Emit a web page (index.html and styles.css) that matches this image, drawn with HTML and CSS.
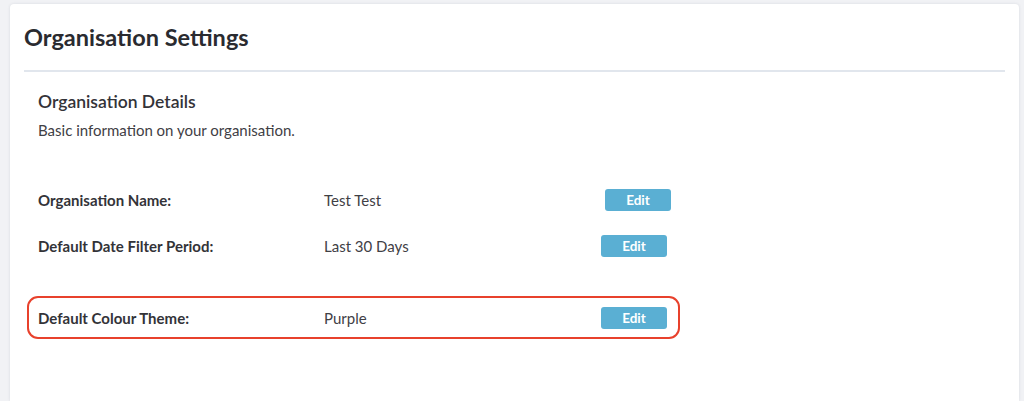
FILE: index.html
```html
<!DOCTYPE html>
<html lang="en">
<head>
<meta charset="utf-8">
<title>Organisation Settings</title>
<link rel="stylesheet" href="styles.css">
</head>
<body>
<div class="card">
  <header class="card-header">
    <h1 class="title">Organisation Settings</h1>
  </header>
  <section class="section">
    <h2 class="section-title">Organisation Details</h2>
    <p class="section-desc">Basic information on your organisation.</p>
    <div class="rows">
      <div class="row row-first">
        <div class="label">Organisation Name:</div>
        <div class="value value-wide">Test Test</div>
        <button class="btn">Edit</button>
      </div>
      <div class="row row-second">
        <div class="label">Default Date Filter Period:</div>
        <div class="value">Last 30 Days</div>
        <button class="btn">Edit</button>
      </div>
      <div class="row row-highlight">
        <div class="label">Default Colour Theme:</div>
        <div class="value">Purple</div>
        <button class="btn">Edit</button>
      </div>
    </div>
  </section>
</div>
</body>
</html>
```

FILE: styles.css
```css
* { box-sizing: border-box; }
html, body { height: 100%; }
body {
  margin: 0;
  padding: 4px 5px 0 10px;
  background: #f1f2f5;
  font-family: Lato, "Open Sans", Arial, sans-serif;
  color: #333338;
  overflow: hidden;
}
.card {
  background: #ffffff;
  border-radius: 4px 4px 0 0;
  box-shadow: 0 0 3px rgba(40, 50, 70, 0.12);
  height: 100%;
}
.card-header {
  margin: 0 14px;
  padding: 17px 0 17px;
  border-bottom: 2px solid #e1e6ed;
}
.title {
  margin: 0;
  font-size: 23.5px;
  line-height: 32px;
  font-weight: 700;
  color: #2a2b30;
}
.section {
  padding: 18px 28px 0;
}
.section-title {
  margin: 0;
  font-size: 17.5px;
  line-height: 24px;
  font-weight: 600;
  color: #333338;
}
.section-desc {
  margin: 6px 0 0;
  font-size: 15px;
  line-height: 20px;
  color: #3f4045;
}
.rows {
  margin-top: 49px;
}
.row {
  display: flex;
  align-items: center;
  height: 22px;
  font-size: 15px;
}
.row-second { margin-top: 24px; }
.row-highlight {
  margin: 39px 0 0 -11px;
  width: 653px;
  height: 43px;
  padding-left: 9px;
  border: 2px solid #e8412c;
  border-radius: 11px;
}
.label {
  width: 286px;
  font-weight: 700;
  color: #333338;
}
.value {
  width: 277px;
  color: #3f4045;
}
.value-wide { width: 281px; }
.btn {
  width: 66px;
  height: 22px;
  padding: 0;
  border: none;
  border-radius: 3px;
  background: #5aafd3;
  color: #ffffff;
  font-family: inherit;
  font-size: 13.5px;
  font-weight: 700;
  line-height: 22px;
}
```
